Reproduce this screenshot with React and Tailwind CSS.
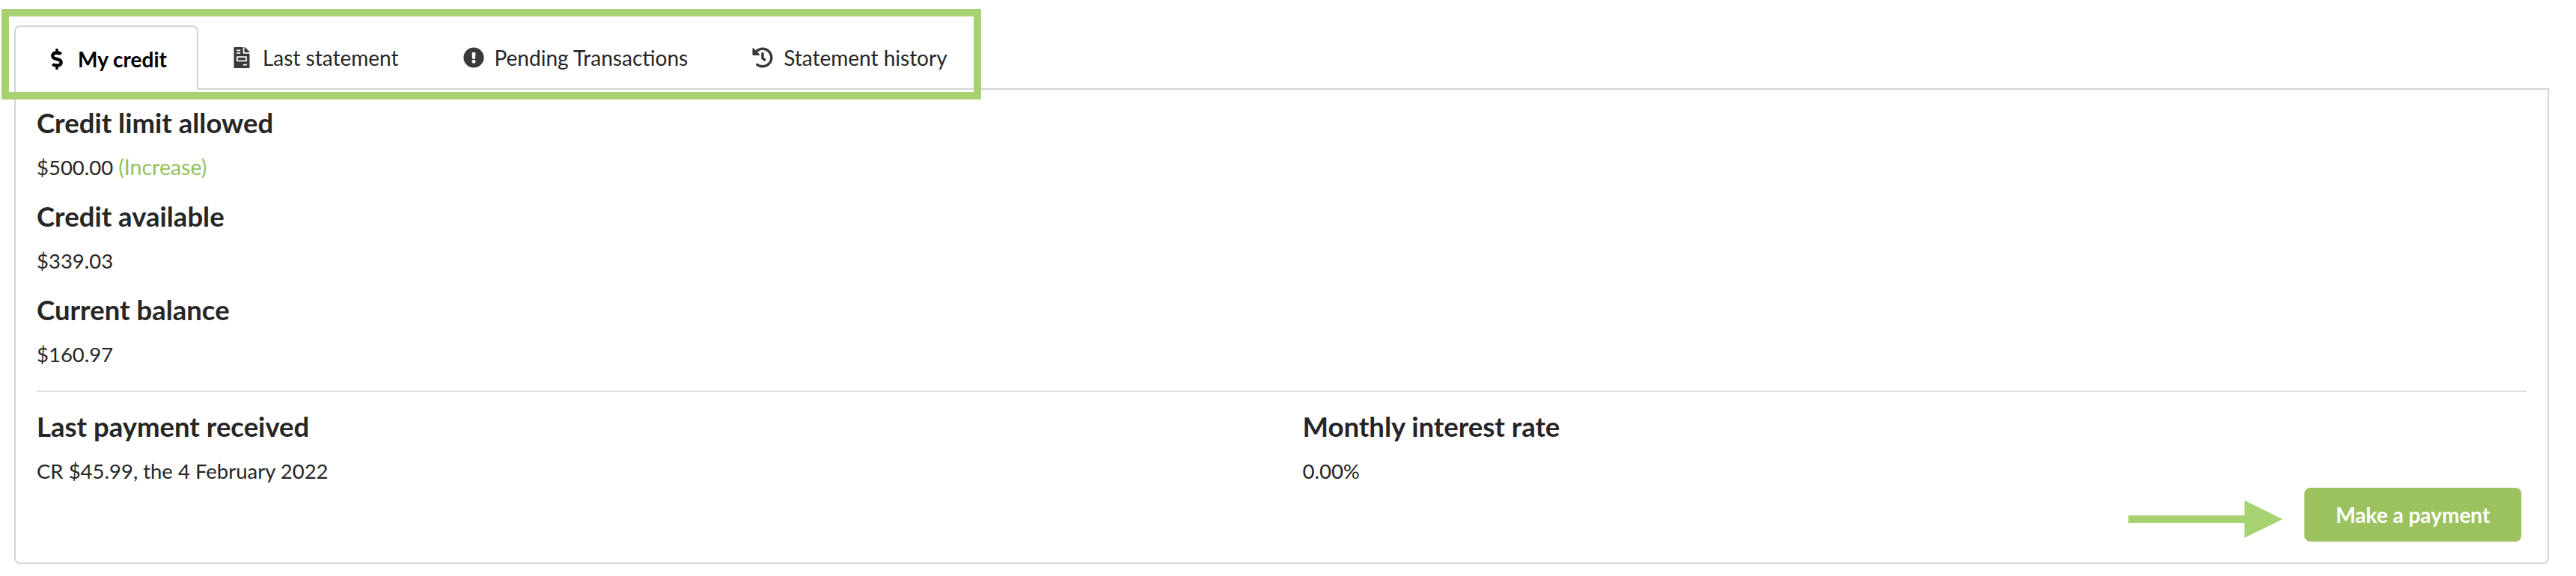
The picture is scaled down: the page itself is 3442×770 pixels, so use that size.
import { FaDollarSign, FaFileInvoice, FaExclamationCircle, FaHistory } from "react-icons/fa";

const tabs = [
  { label: "My credit", icon: FaDollarSign, active: true },
  { label: "Last statement", icon: FaFileInvoice },
  { label: "Pending Transactions", icon: FaExclamationCircle },
  { label: "Statement history", icon: FaHistory },
];

function Stat({ title, children }) {
  return (
    <div>
      <h3 className="text-[36.5px] leading-[42px] font-bold text-[#262626]">{title}</h3>
      <p className="mt-[19px] text-[27.5px] leading-[40px] text-[#262626]">{children}</p>
    </div>
  );
}

export default function App() {
  return (
    <div className="relative h-[770px] w-full overflow-hidden bg-white pt-[34px] pr-[36px] pl-[19px] font-['Lato',sans-serif]">
      <nav className="flex h-[84px] gap-px">
        {tabs.map(({ label, icon: Icon, active }) => (
          <a
            key={label}
            className={
              active
                ? "relative z-10 -mb-[2px] flex h-[86px] items-center rounded-t-lg border-2 border-b-0 border-[#d4d4d4] bg-white px-10 pt-[2px] text-[28px] font-bold text-black"
                : "flex items-center border-2 border-transparent px-10 pt-[2px] text-[28px] text-[#262626]"
            }
          >
            <span className="flex w-[30px] justify-center">
              <Icon className={active ? "h-[28px] w-[28px] text-black" : "h-[28px] w-[28px] text-[#3a3a3a]"} />
            </span>
            <span className="ml-[13px]">{label}</span>
          </a>
        ))}
      </nav>

      <section className="rounded-b-lg border-2 border-[#d4d4d4] px-[28px] pt-[23px] pb-[28px]">
        <div className="flex flex-col gap-[24px]">
          <Stat title="Credit limit allowed">
            $500.00 <span className="text-[28.5px] leading-none text-[#93c25b]">(Increase)</span>
          </Stat>
          <Stat title="Credit available">$339.03</Stat>
          <Stat title="Current balance">$160.97</Stat>
        </div>

        <hr className="mt-[28px] border-t-2 border-[#e0e0e0]" />

        <div className="mt-[25px] grid grid-cols-2">
          <Stat title="Last payment received">CR $45.99, the 4 February 2022</Stat>
          <div className="pl-[28px]">
            <Stat title="Monthly interest rate">0.00%</Stat>
          </div>
        </div>

        <div className="mt-[2px] flex justify-end pr-[7px]">
          <button className="h-[72px] w-[290px] rounded-lg bg-[#9cc25f] text-[28px] font-bold text-white">
            Make a payment
          </button>
        </div>
      </section>

      {/* annotations drawn over the screenshot */}
      <div className="pointer-events-none absolute top-[12px] left-[2px] h-[121px] w-[1309px] border-[10px] border-[#a6d271]" />
      <svg className="absolute top-[669px] left-[2844px]" width="206" height="50" viewBox="0 0 206 50">
        <path d="M0 20H155V0L206 25L155 50V30H0Z" fill="#a6d271" />
      </svg>
    </div>
  );
}
